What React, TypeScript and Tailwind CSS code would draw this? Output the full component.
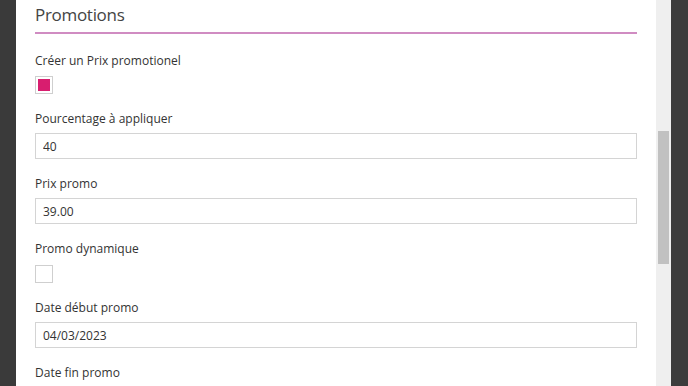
import { FC } from "react";

type FieldProps = {
    label: string
    value: string
}

const TextField: FC<FieldProps> = ({ label, value }) => {
    return (
        <div className="mb-[17px]">
            <label className="block text-[12px] leading-4 text-[#333] mb-[6px]">{label}</label>
            <input
                readOnly
                type="text"
                value={value}
                className="block w-full h-[26px] border border-[#d4d4d4] px-[7px] text-[12px] text-[#333] outline-none"
            />
        </div>
    );
}

const CheckField: FC<{ label: string, checked?: boolean }> = ({ label, checked }) => {
    return (
        <div className="mb-[17px]">
            <label className={`block text-[12px] leading-4 text-[#333] ${checked ? 'mb-[7px]' : 'mb-[8px]'}`}>{label}</label>
            <div className="w-[18px] h-[18px] border border-[#cfcfcf] bg-white p-[2px]">
                {checked && <div className="w-full h-full bg-[#d81e6f]" />}
            </div>
        </div>
    );
}

const App: FC = () => {
    return (
        <div className="flex w-[688px] h-[386px] overflow-hidden bg-[#3a3a3a]" style={{ fontFamily: '"Open Sans", "Noto Sans", sans-serif' }}>
            <div className="w-4 shrink-0 bg-[#3a3a3a]" />
            <div className="flex-1 bg-white px-[19px] pt-[2px]">
                <h2 className="text-[17px] tracking-[-0.3px] leading-[26px] text-[#444] pb-[4px]">Promotions</h2>
                <div className="h-[2px] mb-[19px] bg-[#d08cc2]" />
                <CheckField label="Créer un Prix promotionel" checked />
                <TextField label="Pourcentage à appliquer" value="40" />
                <TextField label="Prix promo" value="39.00" />
                <CheckField label="Promo dynamique" />
                <TextField label="Date début promo" value="04/03/2023" />
                <label className="block text-[12px] leading-4 text-[#333]">Date fin promo</label>
            </div>
            <div className="w-[15px] shrink-0 bg-[#efefef] px-[2px]">
                <div className="mt-[131px] h-[133px] bg-[#c1c1c1]" />
            </div>
            <div className="w-[17px] shrink-0 bg-[#3c3c3c]" />
        </div>
    );
}

export default App;
